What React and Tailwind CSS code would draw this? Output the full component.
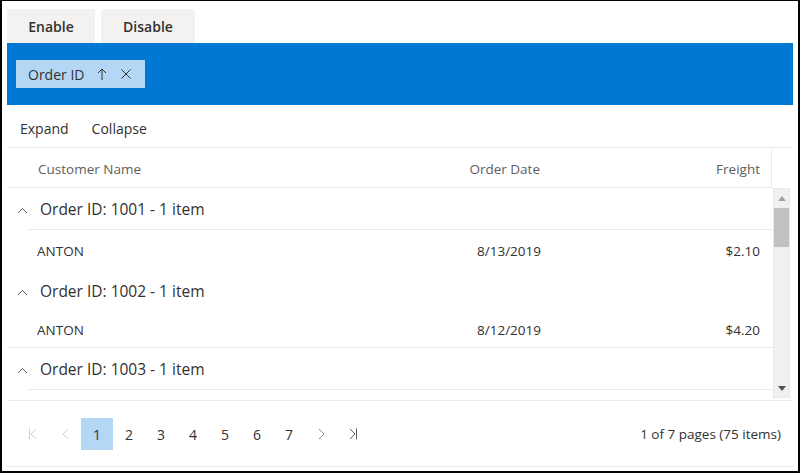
const font = { fontFamily: '"Open Sans", "Noto Sans", sans-serif' };

function Chevron({ dir = 'up', color = '#605e5c', className = '' }) {
  const paths = {
    up: 'M1 6 L5.5 1.5 L10 6',
    left: 'M6 1 L1 6 L6 11',
    right: 'M1 1 L6 6 L1 11',
  };
  const size = dir === 'up' ? { w: 11, h: 7 } : { w: 7, h: 12 };
  return (
    <svg width={size.w} height={size.h} viewBox={`0 0 ${size.w} ${size.h}`} className={className}>
      <path d={paths[dir]} fill="none" stroke={color} strokeWidth="1" />
    </svg>
  );
}

function EdgeIcon({ side, color }) {
  return (
    <svg width="10" height="12" viewBox="0 0 10 12">
      {side === 'first' ? (
        <>
          <path d="M1.5 0.5 V11.5" stroke={color} strokeWidth="1" />
          <path d="M8 1 L3 6 L8 11" fill="none" stroke={color} strokeWidth="1" />
        </>
      ) : (
        <>
          <path d="M8.5 0.5 V11.5" stroke={color} strokeWidth="1" />
          <path d="M2 1 L7 6 L2 11" fill="none" stroke={color} strokeWidth="1" />
        </>
      )}
    </svg>
  );
}

function GroupRow({ id, line = true }) {
  return (
    <div>
      <div className="flex h-[41px] items-center pl-[10px] pt-[3px]">
        <Chevron dir="up" />
        <span className="ml-[12px] text-[15.5px] text-[#323130]">Order ID: {id} - 1 item</span>
      </div>
      <div className={`ml-[21px] h-px ${line ? 'bg-[#edebe9]' : 'bg-transparent'}`} />
    </div>
  );
}

function DataRow({ date, freight, line, h }) {
  return (
    <div
      className={`flex ${h} items-center pt-[2px] text-[13.5px] text-[#323130] ${line ? 'border-b border-[#edebe9]' : ''}`}
    >
      <div className="w-[22px]" />
      <div className="w-[299px] pl-[8px]">ANTON</div>
      <div className="w-[220px] pr-[7px] text-right">{date}</div>
      <div className="w-[220px] pr-[8px] text-right">{freight}</div>
    </div>
  );
}

export default function App() {
  const pages = [1, 2, 3, 4, 5, 6, 7];

  return (
    <div
      style={font}
      className="h-[473px] w-[800px] overflow-hidden border-x-2 border-b-2 border-t border-black bg-white px-[5px] pt-[8px]"
    >
      <div className="flex gap-[6px]">
        <button className="h-[34px] w-[88px] bg-[#f3f2f1] text-[14px] font-semibold text-[#323130]">Enable</button>
        <button className="h-[34px] w-[94px] bg-[#f3f2f1] text-[14px] font-semibold text-[#323130]">Disable</button>
      </div>

      <div className="flex h-[62px] items-center bg-[#0078d4] px-[9px]">
        <div className="flex h-[28px] w-[129px] items-center bg-[#b3d7f5] pl-[12px] text-[14px] text-[#323130]">
          <span>Order ID</span>
          <svg width="10" height="12" viewBox="0 0 10 12" className="ml-[13px]">
            <path d="M5 1 V12 M1 5 L5 1 L9 5" fill="none" stroke="#323130" strokeWidth="1" />
          </svg>
          <svg width="10" height="10" viewBox="0 0 10 10" className="ml-[14px]">
            <path d="M0.5 0.5 L9.5 9.5 M9.5 0.5 L0.5 9.5" stroke="#323130" strokeWidth="1" />
          </svg>
        </div>
      </div>

      <div className="flex h-[43px] items-center gap-[23px] border-b border-[#edebe9] pl-[13px] pt-[4px] text-[14px] text-[#323130]">
        <span>Expand</span>
        <span>Collapse</span>
      </div>

      <div className="flex h-[40px]">
        <div className="flex w-[765px] items-center border-b border-r border-[#edebe9] pt-[3px] text-[13.5px] text-[#605e5c]">
          <div className="w-[22px]" />
          <div className="w-[299px] pl-[9px]">Customer Name</div>
          <div className="w-[220px] pr-[8px] text-right">Order Date</div>
          <div className="w-[220px] pr-[8px] text-right">Freight</div>
        </div>
      </div>

      <div className="flex h-[212px]">
        <div className="w-[766px] overflow-hidden">
          <GroupRow id="1001" />
          <DataRow date="8/13/2019" freight="$2.10" h="h-[40px]" />
          <GroupRow id="1002" line={false} />
          <DataRow date="8/12/2019" freight="$4.20" line h="h-[36px]" />
          <GroupRow id="1003" />
        </div>
        <div className="flex h-[210px] w-[17px] flex-col items-center border border-dotted border-[#e3e3e3] bg-[#f0f0f0]">
          <div className="flex h-[18px] items-center">
            <svg width="8" height="5" viewBox="0 0 8 5">
              <path d="M0 5 L4 0 L8 5 Z" fill="#a3a3a3" />
            </svg>
          </div>
          <div className="mt-[1px] h-[39px] w-[15px] bg-[#c1c1c1]" />
          <div className="flex-1" />
          <div className="flex h-[17px] items-center">
            <svg width="8" height="5" viewBox="0 0 8 5">
              <path d="M0 0 L8 0 L4 5 Z" fill="#505050" />
            </svg>
          </div>
        </div>
      </div>

      <div className="flex h-[67px] items-center justify-between border-y border-[#edebe9] pl-[10px] pr-[12px]">
        <div className="flex text-[14px] text-[#323130]">
          <div className="flex h-[32px] w-[32px] items-center justify-center">
            <EdgeIcon side="first" color="#d2d0ce" />
          </div>
          <div className="flex h-[32px] w-[32px] items-center justify-center">
            <Chevron dir="left" color="#d2d0ce" />
          </div>
          {pages.map((p) => (
            <div
              key={p}
              className={`flex h-[32px] w-[32px] items-center justify-center pt-[2px] ${p === 1 ? 'bg-[#b3d7f5]' : ''}`}
            >
              {p}
            </div>
          ))}
          <div className="flex h-[32px] w-[32px] items-center justify-center">
            <Chevron dir="right" color="#8a8886" />
          </div>
          <div className="flex h-[32px] w-[32px] items-center justify-center">
            <EdgeIcon side="last" color="#605e5c" />
          </div>
        </div>
        <span className="pt-[2px] text-[13.5px] text-[#323130]">1 of 7 pages (75 items)</span>
      </div>
    </div>
  );
}
